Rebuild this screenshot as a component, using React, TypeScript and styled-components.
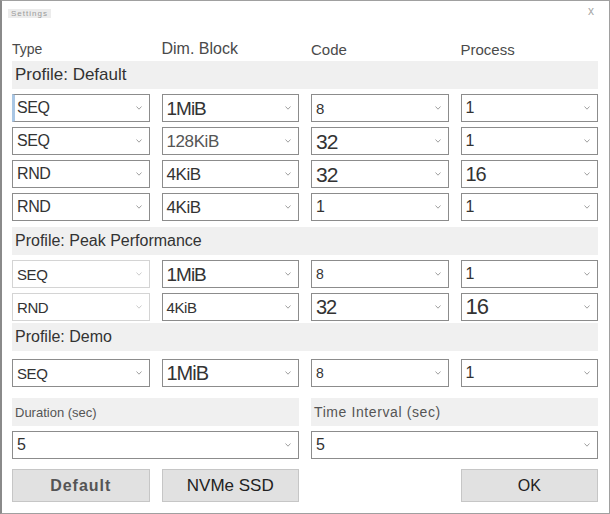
import React from "react";
import styled, { createGlobalStyle } from "styled-components";

const Global = createGlobalStyle`
  html, body { margin: 0; padding: 0; background: #ffffff; }
  body { font-family: "Liberation Sans", Arial, sans-serif; }
`;

const Window = styled.div`
  box-sizing: border-box;
  width: 610px;
  height: 514px;
  border: 1px solid #a0a0a0;
  border-left: 2px solid #8a8a8a;
  background: #fff;
  display: flex;
  flex-direction: column;
  padding: 0 11px 0 10px;
`;

const TitleBar = styled.div`
  height: 30px;
  display: flex;
  align-items: flex-start;
  justify-content: space-between;
`;

const Title = styled.div`
  margin: 8px 0 0 -4px;
  background: #ececec;
  color: #9a9a9a;
  font-size: 8px;
  line-height: 9px;
  padding: 0 3px;
  letter-spacing: 1px;
`;

const Close = styled.div`
  margin: 4px 4px 0 0;
  color: #a8a8a8;
  font-size: 12px;
  line-height: 12px;
`;

const Grid4 = styled.div<{ $mt: number }>`
  display: grid;
  grid-template-columns: repeat(4, 1fr);
  column-gap: 12px;
  margin-top: ${(p) => p.$mt}px;
`;

const Grid2 = styled.div<{ $mt: number }>`
  display: grid;
  grid-template-columns: 1fr 1fr;
  column-gap: 12px;
  margin-top: ${(p) => p.$mt}px;
`;

const Header = styled.div<{ $size: number }>`
  height: 20px;
  display: flex;
  align-items: center;
  font-size: ${(p) => p.$size}px;
  color: #4a4a4a;
`;

const Band = styled.div<{ $mt: number; $size?: number; $color?: string; $ls?: number }>`
  margin-top: ${(p) => p.$mt}px;
  height: 28px;
  background: #f0f0f0;
  display: flex;
  align-items: center;
  padding-left: 3px;
  font-size: ${(p) => p.$size ?? 16}px;
  color: ${(p) => p.$color ?? "#333"};
  letter-spacing: ${(p) => p.$ls ?? 0}px;
`;

const SelectBox = styled.div<{ $disabled?: boolean; $focus?: boolean }>`
  position: relative;
  box-sizing: border-box;
  height: 28px;
  border: 1px solid ${(p) => (p.$disabled ? "#d4d4d4" : "#8c8c8c")};
  background: #fff;
  display: flex;
  align-items: center;
  justify-content: space-between;
  padding: 0 7px 0 4px;
  ${(p) => (p.$focus ? "border-left: 3px solid #a9c6e4; padding-left: 2px;" : "")}
`;

const Value = styled.span<{ $size: number; $color?: string }>`
  font-size: ${(p) => p.$size}px;
  color: ${(p) => p.$color ?? "#333"};
  line-height: 1;
  letter-spacing: ${(p) => (p.$size >= 19 ? -1 : -0.4)}px;
`;

const Chevron = styled.svg`
  width: 6px;
  height: 4px;
  flex: none;
`;

const Rows = styled.div<{ $mt: number }>`
  display: flex;
  flex-direction: column;
  gap: 5px;
  margin-top: ${(p) => p.$mt}px;
`;

const Button = styled.div<{ $size: number; $bold?: boolean; $ls?: number; $color?: string }>`
  box-sizing: border-box;
  height: 33px;
  background: #e1e1e1;
  border: 1px solid #c6c6c6;
  display: flex;
  align-items: center;
  justify-content: center;
  font-size: ${(p) => p.$size}px;
  font-weight: ${(p) => (p.$bold ? 700 : 400)};
  letter-spacing: ${(p) => p.$ls ?? 0}px;
  color: ${(p) => p.$color ?? "#222"};
`;

const Spacer = styled.div``;

type Cell = { v: string; s: number; c?: string; d?: boolean; f?: boolean };

const Select: React.FC<Cell> = ({ v, s, c, d, f }) => (
  <SelectBox $disabled={d} $focus={f}>
    <Value $size={s} $color={c}>{v}</Value>
    <Chevron viewBox="0 0 6 4">
      <path d="M0.5 0.5 L3 3.2 L5.5 0.5" fill="none" stroke={d ? "#cccccc" : "#a0a0a0"} strokeWidth="1" />
    </Chevron>
  </SelectBox>
);

const Row: React.FC<{ cells: Cell[] }> = ({ cells }) => (
  <Grid4 $mt={0}>
    {cells.map((c, i) => (
      <Select key={i} {...c} />
    ))}
  </Grid4>
);

const defaultRows: Cell[][] = [
  [{ v: "SEQ", s: 16, f: true }, { v: "1MiB", s: 19 }, { v: "8", s: 15 }, { v: "1", s: 16 }],
  [{ v: "SEQ", s: 16 }, { v: "128KiB", s: 17, c: "#555" }, { v: "32", s: 21 }, { v: "1", s: 16 }],
  [{ v: "RND", s: 16 }, { v: "4KiB", s: 17 }, { v: "32", s: 21 }, { v: "16", s: 20 }],
  [{ v: "RND", s: 16 }, { v: "4KiB", s: 17 }, { v: "1", s: 16 }, { v: "1", s: 16 }],
];

const peakRows: Cell[][] = [
  [{ v: "SEQ", s: 15, d: true }, { v: "1MiB", s: 19 }, { v: "8", s: 14 }, { v: "1", s: 16 }],
  [{ v: "RND", s: 15, d: true }, { v: "4KiB", s: 15 }, { v: "32", s: 20 }, { v: "16", s: 22 }],
];

const demoRows: Cell[][] = [
  [{ v: "SEQ", s: 15 }, { v: "1MiB", s: 20 }, { v: "8", s: 14 }, { v: "1", s: 16 }],
];

export default function App() {
  return (
    <>
      <Global />
      <Window>
        <TitleBar>
          <Title>Settings</Title>
          <Close>x</Close>
        </TitleBar>
        <Grid4 $mt={8}>
          <Header $size={14}>Type</Header>
          <Header $size={16}>Dim. Block</Header>
          <Header $size={15}>Code</Header>
          <Header $size={15}>Process</Header>
        </Grid4>
        <Band $mt={2} $size={17}>Profile: Default</Band>
        <Rows $mt={5}>
          {defaultRows.map((r, i) => (
            <Row key={i} cells={r} />
          ))}
        </Rows>
        <Band $mt={6}>Profile: Peak Performance</Band>
        <Rows $mt={5}>
          {peakRows.map((r, i) => (
            <Row key={i} cells={r} />
          ))}
        </Rows>
        <Band $mt={2}>Profile: Demo</Band>
        <Rows $mt={8}>
          {demoRows.map((r, i) => (
            <Row key={i} cells={r} />
          ))}
        </Rows>
        <Grid2 $mt={11}>
          <Band $mt={0} $size={13} $color="#555">Duration (sec)</Band>
          <Band $mt={0} $size={14} $color="#555" $ls={0.6}>Time Interval (sec)</Band>
        </Grid2>
        <Grid2 $mt={5}>
          <Select v="5" s={16} />
          <Select v="5" s={16} />
        </Grid2>
        <Grid4 $mt={10}>
          <Button $size={16} $bold $ls={1} $color="#555">Default</Button>
          <Button $size={17}>NVMe SSD</Button>
          <Spacer />
          <Button $size={16}>OK</Button>
        </Grid4>
      </Window>
    </>
  );
}
